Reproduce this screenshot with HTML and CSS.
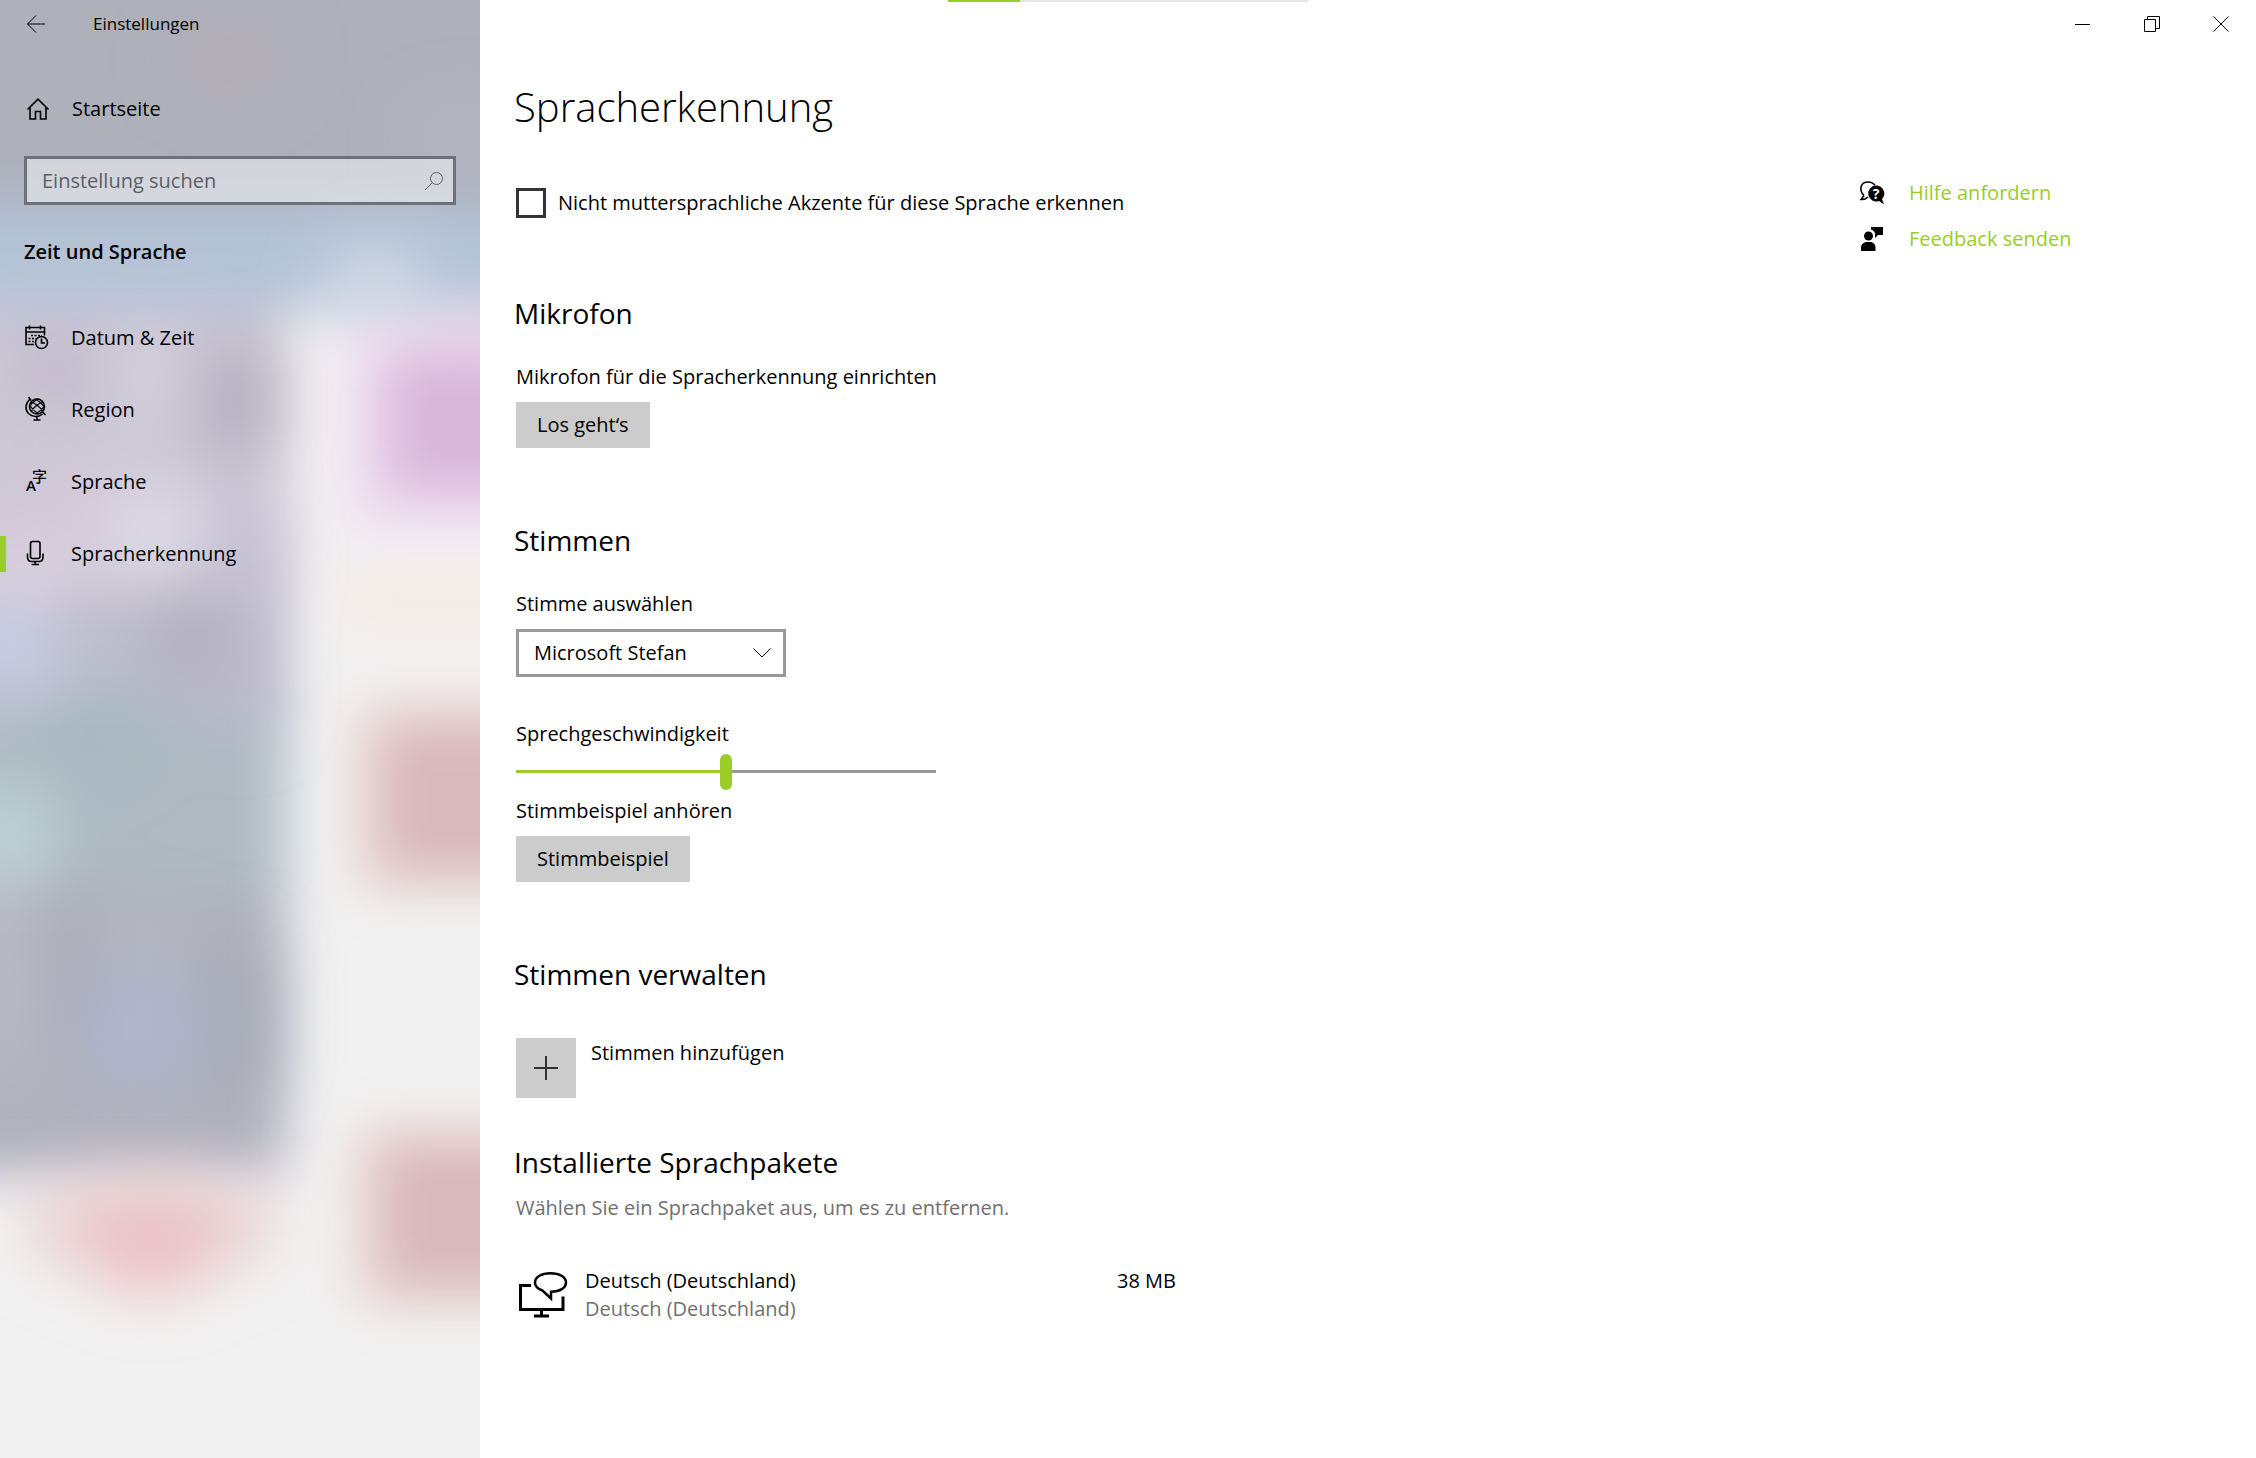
FILE: index.html
```
<!DOCTYPE html>
<html lang="de">
<head>
    <meta charset="UTF-8">
    <meta name="viewport" content="width=device-width, initial-scale=1.0">
    <title>Einstellungen</title>
    <link rel="stylesheet" href="styles.css">
</head>
<body>

    <progress class="top-progress" value="20" max="100" aria-label="Fortschritt"></progress>

    <!-- Sidebar -->
    <aside class="sidebar">
        <svg class="backdrop" viewBox="0 0 480 1458" preserveAspectRatio="none" aria-hidden="true">
            <defs>
                <filter id="soft" x="-50%" y="-50%" width="200%" height="200%"><feGaussianBlur stdDeviation="26"/></filter>
                <filter id="softer" x="-100%" y="-100%" width="300%" height="300%"><feGaussianBlur stdDeviation="32"/></filter>
            </defs>
            <rect width="480" height="1458" fill="#f1f1f1"/>
            <g filter="url(#soft)">
                <rect x="-100" y="-100" width="680" height="310" fill="#aeb0ba"/>
                <rect x="-100" y="205" width="680" height="103" fill="#b4c3d6"/>
                <rect x="-100" y="308" width="385" height="302" fill="#cdc8d6"/>
                <rect x="-100" y="600" width="385" height="120" fill="#bdbccb"/>
                <rect x="-100" y="700" width="385" height="200" fill="#afbac3"/>
                <rect x="-100" y="890" width="385" height="285" fill="#b0b1bd"/>
                <rect x="345" y="315" width="200" height="215" fill="#f0dff1"/>
                <rect x="383" y="350" width="200" height="145" fill="#d8b7d9"/>
                <rect x="340" y="575" width="200" height="50" fill="#f5e9e4"/>
                <rect x="348" y="700" width="200" height="195" fill="#efe0e0"/>
                <rect x="375" y="718" width="200" height="160" fill="#d9b9bb"/>
                <rect x="348" y="1122" width="200" height="188" fill="#efe0e0"/>
                <rect x="375" y="1138" width="200" height="155" fill="#d9b9bb"/>
            </g>
            <g filter="url(#softer)">
                <ellipse cx="230" cy="60" rx="50" ry="30" fill="#b5acb6"/>
                <ellipse cx="465" cy="140" rx="50" ry="30" fill="#bab8c5"/>
                <ellipse cx="375" cy="285" rx="45" ry="35" fill="#dbe0ea"/>
                <ellipse cx="60" cy="370" rx="50" ry="30" fill="#bdb4c6"/>
                <ellipse cx="140" cy="375" rx="35" ry="25" fill="#d8d5e2"/>
                <ellipse cx="235" cy="400" rx="32" ry="65" fill="#aeaaba"/>
                <ellipse cx="65" cy="515" rx="50" ry="22" fill="#dbc5d8"/>
                <ellipse cx="150" cy="530" rx="50" ry="40" fill="#e1deea"/>
                <ellipse cx="20" cy="570" rx="50" ry="20" fill="#e2d8e6"/>
                <ellipse cx="250" cy="560" rx="25" ry="60" fill="#c0bcd2"/>
                <ellipse cx="10" cy="650" rx="50" ry="40" fill="#cbd2e8"/>
                <ellipse cx="195" cy="640" rx="45" ry="50" fill="#b2b0bd"/>
                <ellipse cx="240" cy="690" rx="30" ry="40" fill="#c0bacd"/>
                <ellipse cx="90" cy="735" rx="45" ry="30" fill="#a3b8c0"/>
                <ellipse cx="5" cy="835" rx="45" ry="45" fill="#c2d8dc"/>
                <ellipse cx="0" cy="980" rx="18" ry="110" fill="#c5c3cc"/>
                <ellipse cx="75" cy="970" rx="30" ry="80" fill="#abacb9"/>
                <ellipse cx="140" cy="940" rx="30" ry="25" fill="#bbbfc7"/>
                <ellipse cx="140" cy="1028" rx="38" ry="38" fill="#b0b9db"/>
                <ellipse cx="235" cy="1020" rx="30" ry="90" fill="#a6aab6"/>
                <ellipse cx="150" cy="1225" rx="125" ry="50" fill="#e8cccf"/>
                <ellipse cx="150" cy="1255" rx="60" ry="35" fill="#ecb9bf"/>
            </g>
        </svg>

        <header class="app-bar">
            <button class="back-btn" aria-label="Zurück">
                <svg width="20" height="20" viewBox="0 0 20 20"><path d="M19 10H1.5M10 1.500L1.500 10l8.500 8.500"/></svg>
            </button>
            <span class="app-title">Einstellungen</span>
        </header>

        <a class="home-link" href="#">
            <svg class="icon" viewBox="0 0 24 24"><path d="M1.500 12.500L12 2.200l10.500 10.300M4 10.500V22h5.500v-7.500h5V22H20V10.500"/></svg>
            Startseite
        </a>

        <div class="search">
            <input type="text" placeholder="Einstellung suchen" aria-label="Einstellung suchen">
            <svg class="search-icon" viewBox="0 0 20 20"><circle cx="12.500" cy="7.500" r="6"/><path d="M8.200 11.800L1 19"/></svg>
        </div>

        <h2 class="category">Zeit und Sprache</h2>

        <nav class="nav">
            <a class="nav-item" href="#">
                <svg class="icon" viewBox="0 0 24 24">
                    <path d="M9 18.500H1V1.500h18.500v8M1 6h18.500M4.500 -0.500V3.500M15.500 -0.500V3.500"/>
                    <path class="dots" d="M6 9.500h11M3.500 12.500h8M3.500 15.500h5.500"/>
                    <circle cx="16.500" cy="16.500" r="6"/>
                    <path d="M16.500 12.500v4.500h3.500"/>
                </svg>
                Datum &amp; Zeit
            </a>
            <a class="nav-item" href="#">
                <svg class="icon" viewBox="0 0 24 24">
                    <circle cx="12" cy="8.500" r="7.500"/>
                    <path class="thin" d="M6 4c4 1 10 6 12 9.500M10 1.500c4 1 8 5 9 8M5 7.500c2 3 6 7 9 8.500M18 4C14 5 8 10 6.500 13M13.500 1.200C10 2 6 5.500 4.800 8.500M19.300 8c-2 3-5 6-8.500 7.500"/>
                    <path d="M3.500 -1l2.500 3.500M4.500 1.500C0 6 0 12 3.500 15.500c4 4 10 4 14 .5M17 13.500l3.500 3.500M12 18.500V22M8.500 22h7"/>
                </svg>
                Region
            </a>
            <a class="nav-item" href="#">
                <svg class="icon glyphs" viewBox="0 0 24 24" aria-hidden="true">
                    <text class="latin" x="1" y="21">A</text>
                    <text class="han" x="7" y="12">字</text>
                </svg>
                Sprache
            </a>
            <a class="nav-item active" href="#" aria-current="page">
                <svg class="icon" viewBox="0 0 24 24">
                    <rect x="5.500" y="-0.500" width="9.500" height="17" rx="2"/>
                    <path d="M2.500 11.500v3.500c0 3 1.500 4.500 4 4.500h7.500c2.500 0 4-1.500 4-4.500v-3.500M10.200 19.500V22.500M6.500 22.500h7.500"/>
                </svg>
                Spracherkennung
            </a>
        </nav>
    </aside>

    <!-- Content -->
    <div class="page">
        <div class="window-controls">
            <button aria-label="Minimieren"><svg width="16" height="16" viewBox="0 0 16 16"><path d="M0 8.500h15"/></svg></button>
            <button aria-label="Verkleinern"><svg width="16" height="16" viewBox="0 0 16 16"><path d="M.5 3.500h11v12H.5zM3.500 3.500v-3h12v12h-4"/></svg></button>
            <button aria-label="Schließen"><svg width="16" height="16" viewBox="0 0 16 16"><path d="M.5 .5l15 15M15.500 .5l-15 15"/></svg></button>
        </div>

        <div class="columns">
            <main class="content">
                <h1>Spracherkennung</h1>

                <label class="check">
                    <input type="checkbox">
                    Nicht muttersprachliche Akzente für diese Sprache erkennen
                </label>

                <section class="section">
                    <h2>Mikrofon</h2>
                    <p>Mikrofon für die Spracherkennung einrichten</p>
                    <button class="btn">Los geht‘s</button>
                </section>

                <section class="section">
                    <h2>Stimmen</h2>
                    <label for="voice">Stimme auswählen</label>
                    <div class="select">
                        <select id="voice">
                            <option>Microsoft Stefan</option>
                        </select>
                        <svg class="chevron" viewBox="0 0 18 10"><path d="M.5 .5L9 9l8.500-8.500"/></svg>
                    </div>
                    <label for="speed">Sprechgeschwindigkeit</label>
                    <input class="slider" type="range" id="speed" min="0" max="100" value="50">
                    <p>Stimmbeispiel anhören</p>
                    <button class="btn">Stimmbeispiel</button>
                </section>

                <section class="section manage">
                    <h2>Stimmen verwalten</h2>
                    <div class="add-row">
                        <button class="add-btn" aria-labelledby="addLabel">
                            <svg width="24" height="24" viewBox="0 0 24 24"><path d="M12 0v24M0 12h24"/></svg>
                        </button>
                        <span id="addLabel">Stimmen hinzufügen</span>
                    </div>
                </section>

                <section class="packages">
                    <h2>Installierte Sprachpakete</h2>
                    <p class="muted">Wählen Sie ein Sprachpaket aus, um es zu entfernen.</p>
                    <div class="package">
                        <svg class="package-icon" viewBox="0 0 50 48">
                            <path d="M13 14.500H2.500v24H45V25.500M23.500 38.500v6M16 45h15"/>
                            <path d="M33 27.500l-8.500-8C20 18 17 15 17 11.500 17 6 23.500 2.200 32.500 2.200S48 6 48 11.500 42 20.500 33 20.800z" class="bubble"/>
                        </svg>
                        <div class="package-name">
                            <div>Deutsch (Deutschland)</div>
                            <div class="muted">Deutsch (Deutschland)</div>
                        </div>
                        <span class="package-size">38 MB</span>
                    </div>
                </section>
            </main>

            <div class="help">
                <a href="#">
                    <svg viewBox="0 0 24 24">
                        <path class="line" d="M4 14.500C-1.500 9 .5 1 8 1c3.500 0 5.500 1.200 7 3.500M4 14.500L1 18.500c3 .2 5-.5 7-2.500"/>
                        <path d="M16 4.500a8 8 0 1 0 3 15.500l5 3.500-2-5.500A8 8 0 0 0 16 4.500z"/>
                        <text x="16" y="18">?</text>
                    </svg>
                    Hilfe anfordern
                </a>
                <a href="#">
                    <svg viewBox="0 0 24 24">
                        <circle cx="8.500" cy="9" r="4.500"/>
                        <path d="M1 24v-3c0-3.500 2.500-6 6-6h3c3.500 0 5.500 2.500 5.500 6v3z"/>
                        <path d="M11 0h12v8h-5l-3 3V7c0-2-1.500-4-4-4.500z"/>
                    </svg>
                    Feedback senden
                </a>
            </div>
        </div>
    </div>

</body>
</html>
```
FILE: styles.css
```
* {
    box-sizing: border-box;
}
body {
    font-family: 'Open Sans', 'Noto Sans', sans-serif;
    font-size: 20px;
    line-height: 30px;
    color: #000;
    background-color: #fff;
    margin: 0;
    display: flex;
    min-height: 100vh;
}
h1, h2, p {
    margin: 0;
}
a {
    color: inherit;
    text-decoration: none;
}
button, input, select {
    font: inherit;
    color: inherit;
}
button {
    border: none;
    background: none;
    padding: 0;
}
svg {
    flex: none;
    fill: none;
    stroke: #000;
    overflow: visible;
}

/* Loading bar on the top edge of the window */
.top-progress {
    position: absolute;
    top: 0;
    left: 42%;
    width: 16%;
    height: 2px;
    appearance: none;
    border: none;
}
.top-progress::-webkit-progress-bar {
    background: #e6e6e6;
}
.top-progress::-webkit-progress-value {
    background: #9acd27;
}

/* Sidebar */
.sidebar {
    position: relative;
    flex: none;
    width: 480px;
    overflow: hidden;
    isolation: isolate;
}
.backdrop {
    position: absolute;
    inset: 0;
    width: 100%;
    height: 100%;
    stroke: none;
    z-index: -1;
}
.app-bar {
    display: flex;
    align-items: center;
    height: 48px;
}
.back-btn {
    display: flex;
    justify-content: center;
    width: 72px;
}
.app-title {
    padding-left: 21px;
    font-size: 17px;
}
.icon {
    width: 24px;
    height: 24px;
    stroke-width: 1.6;
}
.home-link {
    display: flex;
    align-items: center;
    gap: 22px;
    height: 72px;
    margin-top: 25px;
    padding-left: 26px;
}
.search {
    position: relative;
    margin: 11px 24px 0;
}
.search input {
    display: block;
    width: 100%;
    height: 49px;
    padding: 0 48px 0 15px;
    border: 3px solid #6e7179;
    border-radius: 0;
    background: rgba(255, 255, 255, 0.45);
    outline: none;
}
.search input::placeholder {
    color: #5d5f64;
    opacity: 1;
}
.search-icon {
    position: absolute;
    top: 15px;
    right: 12px;
    width: 20px;
    height: 20px;
    stroke: #5d5f64;
}
.category {
    margin: 32px 24px 35px;
    font-size: 20px;
    line-height: 30px;
    font-weight: 600;
}
.nav-item {
    display: flex;
    align-items: center;
    gap: 22px;
    height: 72px;
    padding-left: 25px;
    position: relative;
}
.nav-item.active::before {
    content: '';
    position: absolute;
    left: 0;
    top: 18px;
    width: 6px;
    height: 36px;
    background: #9acd27;
}
.dots {
    stroke-dasharray: 2 1.5;
}
.thin {
    stroke-width: 1.2;
}
.glyphs {
    fill: #000;
    stroke: none;
}
.latin {
    font-size: 15px;
    font-weight: 600;
}
.han {
    font-family: 'Noto Sans CJK SC', sans-serif;
    font-size: 15px;
    font-weight: 500;
}

/* Content */
.page {
    flex: 1;
}
.window-controls {
    display: flex;
    justify-content: flex-end;
    padding-right: 1px;
}
.window-controls button {
    display: flex;
    justify-content: center;
    align-items: center;
    width: 69px;
    height: 48px;
}
.columns {
    display: flex;
    justify-content: space-between;
    padding: 31px 36px;
}
.content {
    width: 660px;
}
h1 {
    margin-left: -2px;
    font-size: 40px;
    line-height: 56px;
    font-weight: 300;
}
.content h2 {
    margin: 0 0 29px -2px;
    font-size: 28px;
    line-height: 40px;
    font-weight: 400;
}
.check {
    display: flex;
    align-items: center;
    gap: 12px;
    margin: 53px 0 3px;
}
.check input {
    appearance: none;
    width: 30px;
    height: 30px;
    margin: 0;
    border: 3px solid #333;
}
.section {
    display: flex;
    flex-direction: column;
    align-items: flex-start;
    padding-top: 72px;
}
.btn {
    height: 46px;
    margin-top: 10px;
    padding: 0 21px;
    background: #ccc;
}
.select {
    position: relative;
    width: 270px;
    margin: 10px 0 42px;
}
.select select {
    display: block;
    appearance: none;
    width: 100%;
    height: 48px;
    padding: 0 48px 0 15px;
    border: 3px solid #999;
    border-radius: 0;
    background: #fff;
}
.chevron {
    position: absolute;
    top: 19px;
    right: 15px;
    width: 18px;
    height: 10px;
}
.slider {
    appearance: none;
    width: 420px;
    height: 36px;
    margin: 5px 0 6px;
    background: linear-gradient(to right, #9acd27 50%, #999 50%) 0 16px / 100% 3px no-repeat;
}
.slider::-webkit-slider-thumb {
    appearance: none;
    width: 12px;
    height: 36px;
    border-radius: 6px;
    background: #9acd27;
}
.content .manage h2 {
    margin-bottom: 44px;
}
.add-row {
    display: flex;
    gap: 15px;
}
.add-btn {
    display: flex;
    justify-content: center;
    align-items: center;
    width: 60px;
    height: 60px;
    background: #ccc;
}
.add-btn svg {
    stroke-width: 2;
    stroke: #333;
}
.packages {
    padding-top: 44px;
}
.content .packages h2 {
    margin-bottom: 11px;
}
.muted {
    color: #707070;
}
.package {
    display: flex;
    margin-top: 44px;
    line-height: 28px;
}
.package-icon {
    width: 50px;
    height: 48px;
    margin: 4px 17px 0 2px;
    stroke-width: 3;
}
.bubble {
    stroke-width: 2.5;
}
.package-size {
    margin-left: auto;
}

/* Help links */
.help {
    display: flex;
    flex-direction: column;
    gap: 16px;
    width: 360px;
    padding-top: 99px;
}
.help a {
    display: flex;
    align-items: center;
    gap: 25px;
    color: #9acd27;
}
.help svg {
    width: 24px;
    height: 24px;
    fill: #000;
    stroke: none;
}
.help .line {
    fill: none;
    stroke: #000;
    stroke-width: 1.6;
}
.help text {
    fill: #fff;
    font-size: 14px;
    font-weight: 700;
    text-anchor: middle;
}
```
